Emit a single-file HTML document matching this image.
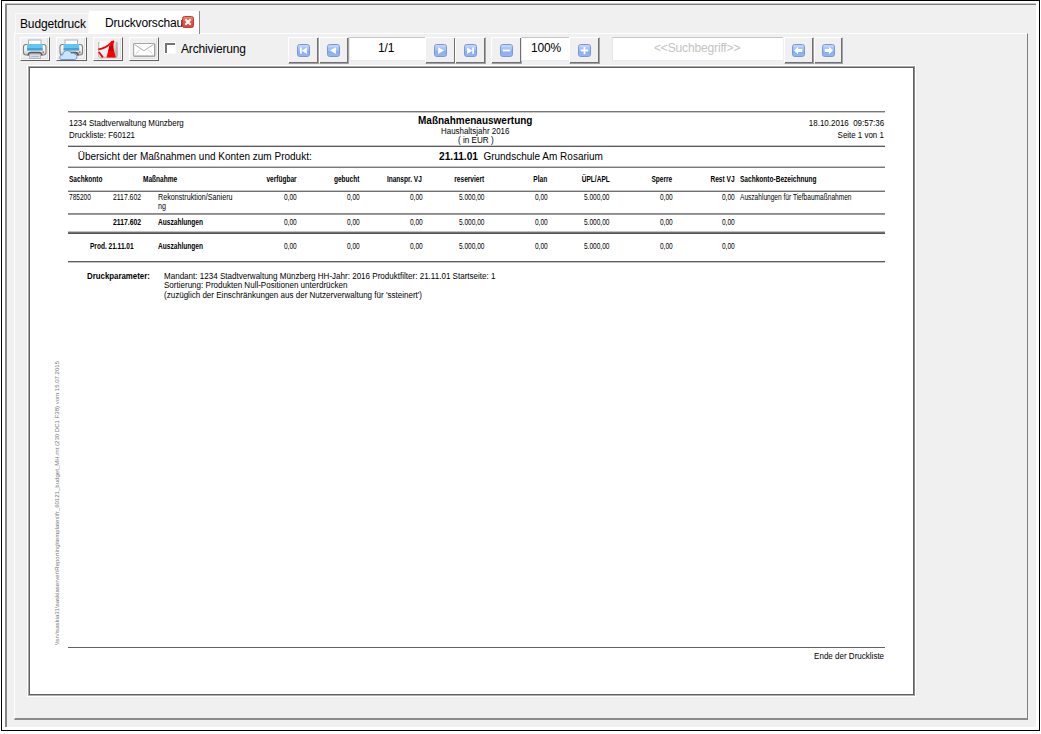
<!DOCTYPE html>
<html><head><meta charset="utf-8">
<style>
html,body{margin:0;padding:0;background:#fff;width:1041px;height:734px;overflow:hidden;position:relative;font-family:"Liberation Sans",sans-serif;}
div,span,svg{position:absolute;box-sizing:border-box;}
.t{white-space:nowrap;line-height:1;}
.win{left:1px;top:0;width:1039px;height:731px;border:1px solid #000;background:#fff;}
.p2{left:5px;top:4px;width:1031px;height:723px;background:#f0f0f0;border-left:2px solid #868686;border-top:1px solid #7e7e7e;}
.tabpanel{left:14px;top:33px;width:1014px;height:687px;border-left:1px solid #fff;border-top:1px solid #fff;border-right:1px solid #808080;border-bottom:2px solid #8a8a8a;}
.tab1{left:15px;top:13px;width:74px;height:20px;background:#f0f0f0;border:1px solid #f9f9f9;border-bottom:none;}
.tab2{left:89px;top:11px;width:111px;height:23px;background:#fff;border-right:1px solid #8a8a8a;}
.ui{font-size:12px;color:#000;letter-spacing:-0.15px;}
.btn{top:37px;height:24px;border-top:1px solid #fff;border-left:1px solid #fff;border-right:1px solid #606060;border-bottom:1px solid #606060;background:#f0f0f0;box-shadow:inset -1px -1px 0 #fafafa, inset -2px -2px 0 #e0e0e0;}
.nbtn{top:37px;height:27px;border-top:1px solid #fff;border-left:1px solid #fff;border-right:1px solid #a4a4a4;border-bottom:1px solid #9aa0a4;background:#f0f0f0;box-shadow:inset -1px -1px 0 #707070;}
.fld{background:#fff;border-top:1px solid #c6c6c6;border-left:1px solid #e6e6e6;border-bottom:1px solid #e8ecf2;}
</style></head><body>
<div class="win"></div>
<div style="left:5px;top:3px;width:1031px;height:1px;background:#c8c8c8;"></div>
<div class="p2"></div>
<div class="tabpanel"></div>
<div class="tab1"></div>
<div class="tab2"></div>
<span class="t ui" style="left:20px;top:18px;">Budgetdruck</span>
<span class="t ui" style="left:105px;top:17px;">Druckvorschau</span>
<!-- close icon -->
<svg style="left:182px;top:16px" width="12" height="12" viewBox="0 0 12 12">
<defs><linearGradient id="cg" x1="0" y1="0" x2="0" y2="1"><stop offset="0" stop-color="#f08a5a"/><stop offset="0.5" stop-color="#e4504a"/><stop offset="1" stop-color="#d8403e"/></linearGradient></defs>
<rect x="0.5" y="0.5" width="11" height="11" rx="2" fill="url(#cg)" stroke="#c83a3a" stroke-width="1"/>
<path d="M3.3 3.3L8.7 8.7M8.7 3.3L3.3 8.7" stroke="#fff" stroke-width="2"/>
</svg>

<!-- toolbar buttons -->
<div class="btn" style="left:20px;width:30px;"></div>
<div class="btn" style="left:56px;width:31px;"></div>
<div class="btn" style="left:93px;width:30px;"></div>
<div class="btn" style="left:129px;width:30px;"></div>

<!-- checkbox -->
<div style="left:164px;top:42px;width:12px;height:12px;border:1px solid #f9f9f9;"></div><div style="left:165px;top:43px;width:10px;height:10px;border-top:2px solid #747474;border-left:2px solid #747474;background:#fff;"></div>
<span class="t ui" style="left:181px;top:43px;">Archivierung</span>

<!-- nav -->
<div class="nbtn" style="left:288px;width:31px;"></div>
<div class="nbtn" style="left:319px;width:30px;"></div>
<div class="fld" style="left:349px;top:37px;width:76px;height:24px;"></div>
<span class="t ui" style="left:378px;top:42px;">1/1</span>
<div class="nbtn" style="left:425px;width:31px;"></div>
<div class="nbtn" style="left:455px;width:31px;"></div>
<div class="nbtn" style="left:491px;width:31px;"></div>
<div class="fld" style="left:521px;top:37px;width:48px;height:24px;"></div>
<span class="t ui" style="left:531px;top:42px;">100%</span>
<div class="nbtn" style="left:569px;width:31px;"></div>
<div class="fld" style="left:612px;top:37px;width:171px;height:24px;"></div>
<span class="t ui" style="left:654px;top:42px;color:#c3c3c3;">&lt;&lt;Suchbegriff&gt;&gt;</span>
<div class="nbtn" style="left:784px;width:30px;"></div>
<div class="nbtn" style="left:814px;width:29px;"></div>

<!--ICONS-->
<svg style="left:20px;top:36px" width="32" height="26" viewBox="0 0 32 26">
<rect x="8.5" y="4" width="12.5" height="5" fill="#fff" stroke="#b0b0b0" stroke-width="1"/>
<defs><linearGradient id="prg" x1="0" y1="0" x2="0" y2="1"><stop offset="0" stop-color="#fdfdfd"/><stop offset="0.6" stop-color="#ececec"/><stop offset="1" stop-color="#c4c4c4"/></linearGradient></defs><rect x="3.5" y="8.5" width="22.5" height="10.5" rx="2.5" fill="url(#prg)" stroke="#808080" stroke-width="1.1"/>
<rect x="7" y="8" width="15.7" height="4.2" fill="#62c6f4"/>
<rect x="7" y="12" width="15.7" height="2.6" fill="#45a3d6"/>
<path d="M8.3 19.5 Q8.3 16.6 11 16.6 H19 Q21.7 16.6 21.7 19.5" fill="none" stroke="#5a5a5a" stroke-width="1.6"/>
<rect x="9.5" y="18" width="11" height="4.6" fill="#d8dce4" stroke="#a8acb4" stroke-width="0.8"/><rect x="11" y="20" width="8" height="1" fill="#b4b8c0"/>
<circle cx="23.2" cy="16.2" r="0.9" fill="#e25a4a"/>
</svg>
<svg style="left:55px;top:36px" width="32" height="26" viewBox="0 0 32 26">
<rect x="10" y="4" width="12.5" height="5" fill="#fff" stroke="#b0b0b0" stroke-width="1"/>
<rect x="5" y="8.5" width="22.5" height="10.5" rx="2.5" fill="url(#prg)" stroke="#808080" stroke-width="1.1"/>
<rect x="8.5" y="8" width="15.7" height="4.2" fill="#62c6f4"/>
<rect x="8.5" y="12" width="15.7" height="2.6" fill="#45a3d6"/>
<path d="M9.8 19.5 Q9.8 16.6 12.5 16.6 H20.5 Q23.2 16.6 23.2 19.5" fill="none" stroke="#5a5a5a" stroke-width="1.6"/>
<circle cx="24.7" cy="16.2" r="0.9" fill="#e25a4a"/>
<path d="M6 23.5 Q4.5 23.5 4.8 21 Q5.2 18.6 7.6 18.8 Q8.2 14.6 12 14.4 Q15.4 14.4 16.4 17.4 Q18.4 16.4 19.8 18 Q22.2 18.4 22 21 Q21.8 23.5 19.5 23.5 Z" fill="#c8e5fa" stroke="#6f8fcc" stroke-width="0.9"/>
</svg>
<svg style="left:93px;top:36px" width="30" height="26" viewBox="0 0 30 26">
<defs><linearGradient id="pg" x1="0" y1="0" x2="1" y2="0.6"><stop offset="0" stop-color="#e4e8ec"/><stop offset="0.15" stop-color="#ffffff"/><stop offset="0.6" stop-color="#eef0f2"/><stop offset="1" stop-color="#b4b4b4"/></linearGradient></defs>
<rect x="5.2" y="5" width="19.4" height="16.8" rx="2" fill="url(#pg)"/><rect x="5.3" y="6" width="0.9" height="15" fill="#a8acb0"/><rect x="23.2" y="6" width="1.3" height="15" fill="#b0b0b0"/><rect x="6" y="20.8" width="18" height="1" fill="#b8b8b8"/>
<path d="M5.3 13.4 Q12.5 12.4 17.6 7.4 Q19.5 5.5 21 5.2" fill="none" stroke="#ff0000" stroke-width="1.9"/>
<path d="M18.2 5 L21.4 5.1 Q20.2 8.5 20.2 11.5 L22.8 21.4 L13.6 21.4 L16.8 8.2 Z" fill="#ff0000"/>
<path d="M16.4 10 L20.2 9.6 L20.6 15 L15.4 15 Z" fill="#cc0000"/>
<path d="M5.8 16 L9.9 21.3" fill="none" stroke="#ff0000" stroke-width="1.9"/>
</svg>
<svg style="left:129px;top:36px" width="30" height="26" viewBox="0 0 30 26">
<rect x="4.6" y="7.5" width="21" height="12.6" rx="0.8" fill="#fff" stroke="#a6a6a6" stroke-width="1.1"/>
<path d="M4.8 20.3 H25.8 V8" fill="none" stroke="#9a9a9a" stroke-width="0.8"/>
<path d="M5.6 8.6 L14.9 14.7 L24.4 8.6" fill="none" stroke="#a4a4a4" stroke-width="0.9"/>
<path d="M6.4 18.4 L11 13.6 M19 13.6 L23.8 18.4" fill="none" stroke="#b8bcc8" stroke-width="0.7"/>
</svg>
<svg width="0" height="0" style="left:0;top:0"><defs><linearGradient id="ng" x1="0" y1="0" x2="0" y2="1"><stop offset="0" stop-color="#bcd4fa"/><stop offset="0.5" stop-color="#9ebdf4"/><stop offset="0.55" stop-color="#8aaef0"/><stop offset="1" stop-color="#94b6f2"/></linearGradient></defs></svg>
<svg style="left:297px;top:44px" width="13" height="13" viewBox="0 0 13 13">
<rect x="0.5" y="0.5" width="12" height="12" rx="2.2" fill="url(#ng)" stroke="#7b98d6" stroke-width="1"/>
<rect x="1.5" y="1.5" width="10" height="1" fill="#c8dcfc" opacity="0.8"/>
<path d="M3 3.6h1.7v6.2H3z M4.6 6.7 L9.9 3.4 V10 Z" fill="#fff"/>
</svg>
<svg style="left:327px;top:44px" width="13" height="13" viewBox="0 0 13 13">
<rect x="0.5" y="0.5" width="12" height="12" rx="2.2" fill="url(#ng)" stroke="#7b98d6" stroke-width="1"/>
<rect x="1.5" y="1.5" width="10" height="1" fill="#c8dcfc" opacity="0.8"/>
<path d="M3 6.5 L8.9 3.3 V9.9 Z" fill="#fff"/>
</svg>
<svg style="left:434px;top:44px" width="13" height="13" viewBox="0 0 13 13">
<rect x="0.5" y="0.5" width="12" height="12" rx="2.2" fill="url(#ng)" stroke="#7b98d6" stroke-width="1"/>
<rect x="1.5" y="1.5" width="10" height="1" fill="#c8dcfc" opacity="0.8"/>
<path d="M10 6.5 L4.1 3.3 V9.9 Z" fill="#fff"/>
</svg>
<svg style="left:464px;top:44px" width="13" height="13" viewBox="0 0 13 13">
<rect x="0.5" y="0.5" width="12" height="12" rx="2.2" fill="url(#ng)" stroke="#7b98d6" stroke-width="1"/>
<rect x="1.5" y="1.5" width="10" height="1" fill="#c8dcfc" opacity="0.8"/>
<path d="M8.3 3.6h1.7v6.2H8.3z M8.4 6.7 L3.1 3.4 V10 Z" fill="#fff"/>
</svg>
<svg style="left:500px;top:44px" width="13" height="13" viewBox="0 0 13 13">
<rect x="0.5" y="0.5" width="12" height="12" rx="2.2" fill="url(#ng)" stroke="#7b98d6" stroke-width="1"/>
<rect x="1.5" y="1.5" width="10" height="1" fill="#c8dcfc" opacity="0.8"/>
<rect x="2.8" y="5.6" width="7.4" height="1.8" fill="#fff"/>
</svg>
<svg style="left:578px;top:44px" width="13" height="13" viewBox="0 0 13 13">
<rect x="0.5" y="0.5" width="12" height="12" rx="2.2" fill="url(#ng)" stroke="#7b98d6" stroke-width="1"/>
<rect x="1.5" y="1.5" width="10" height="1" fill="#c8dcfc" opacity="0.8"/>
<rect x="2.8" y="5.6" width="7.4" height="1.8" fill="#fff"/><rect x="5.6" y="2.8" width="1.8" height="7.4" fill="#fff"/>
</svg>
<svg style="left:792px;top:44px" width="13" height="13" viewBox="0 0 13 13">
<rect x="0.5" y="0.5" width="12" height="12" rx="2.2" fill="url(#ng)" stroke="#7b98d6" stroke-width="1"/>
<rect x="1.5" y="1.5" width="10" height="1" fill="#c8dcfc" opacity="0.8"/>
<path d="M2 6.5 L6 2.8 V5 H10.3 V8 H6 V10.2 Z" fill="#fff"/>
</svg>
<svg style="left:822px;top:44px" width="13" height="13" viewBox="0 0 13 13">
<rect x="0.5" y="0.5" width="12" height="12" rx="2.2" fill="url(#ng)" stroke="#7b98d6" stroke-width="1"/>
<rect x="1.5" y="1.5" width="10" height="1" fill="#c8dcfc" opacity="0.8"/>
<path d="M11 6.5 L7 2.8 V5 H2.7 V8 H7 V10.2 Z" fill="#fff"/>
</svg>
<!--/ICONS-->
<!-- page -->
<div style="left:27px;top:65px;width:889px;height:632px;background:#fff;"></div>
<div style="left:28px;top:66px;width:887px;height:630px;border-left:1px solid #a8a8a8;border-top:1px solid #a8a8a8;border-right:1px solid #8a8a8a;border-bottom:1px solid #b0b0b0;"></div>
<div style="left:29px;top:67px;width:885px;height:628px;border:1px solid #606060;background:#fff;"></div>
<!--PAGE-->
<div style="left:68px;top:111px;width:817px;height:1px;background:#777;"></div>
<div style="left:68px;top:112px;width:817px;height:1px;background:#c8c8c8;"></div>
<div style="left:68px;top:145px;width:817px;height:1px;background:#c8c8c8;"></div>
<div style="left:68px;top:146px;width:817px;height:1px;background:#5a5a5a;"></div>
<div style="left:68px;top:166px;width:817px;height:1px;background:#c4c4c4;"></div>
<div style="left:68px;top:167px;width:817px;height:1px;background:#7a7a7a;"></div>
<div style="left:68px;top:190px;width:817px;height:1px;background:#c4c4c4;"></div>
<div style="left:68px;top:191px;width:817px;height:1px;background:#727272;"></div>
<div style="left:68px;top:213px;width:817px;height:1px;background:#8a8a8a;"></div>
<div style="left:68px;top:214px;width:817px;height:1px;background:#9c9c9c;"></div>
<div style="left:68px;top:231px;width:817px;height:1px;background:#c4c4c4;"></div>
<div style="left:68px;top:232px;width:817px;height:1px;background:#727272;"></div>
<div style="left:68px;top:233px;width:817px;height:1px;background:#555;"></div>
<div style="left:68px;top:261px;width:817px;height:1px;background:#5c5c5c;"></div>
<div style="left:68px;top:262px;width:817px;height:1px;background:#c4c4c4;"></div>
<div style="left:68px;top:647px;width:817px;height:1px;background:#626262;"></div>
<span class="t" style="left:69px;top:119px;font-size:8.4px;transform:scaleX(0.9520);transform-origin:0 0;">1234 Stadtverwaltung Münzberg</span>
<span class="t" style="left:69px;top:131px;font-size:8.4px;transform:scaleX(0.9452);transform-origin:0 0;">Druckliste: F60121</span>
<span class="t" style="left:418px;top:116px;font-size:10px;font-weight:bold;">Maßnahmenauswertung</span>
<span class="t" style="left:441px;top:127px;font-size:8.4px;transform:scaleX(0.9477);transform-origin:0 0;">Haushaltsjahr 2016</span>
<span class="t" style="left:457.6px;top:136px;font-size:8.4px;transform:scaleX(0.9710);transform-origin:0 0;">( in EUR )</span>
<span class="t" style="right:157.00px;top:119px;font-size:8.4px;transform:scaleX(0.9511);transform-origin:100% 0;">18.10.2016  09:57:36</span>
<span class="t" style="right:157.20px;top:131px;font-size:8.4px;transform:scaleX(0.9470);transform-origin:100% 0;">Seite 1 von 1</span>
<span class="t" style="left:77.7px;top:152px;font-size:10px;">Übersicht der Maßnahmen und Konten zum Produkt:</span>
<span class="t" style="left:439px;top:152px;font-size:10px;font-weight:bold;transform:scaleX(1.0163);transform-origin:0 0;">21.11.01</span>
<span class="t" style="left:483.4px;top:152px;font-size:10px;">Grundschule Am Rosarium</span>
<span class="t" style="left:68.8px;top:175px;font-size:8.6px;font-weight:bold;transform:scaleX(0.7628);transform-origin:0 0;">Sachkonto</span>
<span class="t" style="left:143px;top:175px;font-size:8.6px;font-weight:bold;transform:scaleX(0.7628);transform-origin:0 0;">Maßnahme</span>
<span class="t" style="right:744.70px;top:175px;font-size:8.6px;font-weight:bold;transform:scaleX(0.7628);transform-origin:100% 0;">verfügbar</span>
<span class="t" style="right:681.70px;top:175px;font-size:8.6px;font-weight:bold;transform:scaleX(0.7628);transform-origin:100% 0;">gebucht</span>
<span class="t" style="right:618.70px;top:175px;font-size:8.6px;font-weight:bold;transform:scaleX(0.7628);transform-origin:100% 0;">Inanspr. VJ</span>
<span class="t" style="right:556.50px;top:175px;font-size:8.6px;font-weight:bold;transform:scaleX(0.7628);transform-origin:100% 0;">reserviert</span>
<span class="t" style="right:493.70px;top:175px;font-size:8.6px;font-weight:bold;transform:scaleX(0.7628);transform-origin:100% 0;">Plan</span>
<span class="t" style="right:431.30px;top:175px;font-size:8.6px;font-weight:bold;transform:scaleX(0.7628);transform-origin:100% 0;">ÜPL/APL</span>
<span class="t" style="right:368.50px;top:175px;font-size:8.6px;font-weight:bold;transform:scaleX(0.7628);transform-origin:100% 0;">Sperre</span>
<span class="t" style="right:306.50px;top:175px;font-size:8.6px;font-weight:bold;transform:scaleX(0.7628);transform-origin:100% 0;">Rest VJ</span>
<span class="t" style="left:739.5px;top:175px;font-size:8.6px;font-weight:bold;transform:scaleX(0.7628);transform-origin:0 0;">Sachkonto-Bezeichnung</span>
<span class="t" style="left:69px;top:193px;font-size:8.6px;transform:scaleX(0.7628);transform-origin:0 0;">785200</span>
<span class="t" style="left:113px;top:193px;font-size:8.6px;transform:scaleX(0.7950);transform-origin:0 0;">2117.602</span>
<span class="t" style="left:157.5px;top:193px;font-size:8.6px;transform:scaleX(0.8340);transform-origin:0 0;">Rekonstruktion/Sanieru</span>
<span class="t" style="left:157.5px;top:202px;font-size:8.6px;transform:scaleX(0.8330);transform-origin:0 0;">ng</span>
<span class="t" style="right:744.70px;top:193px;font-size:8.6px;transform:scaleX(0.7628);transform-origin:100% 0;">0,00</span>
<span class="t" style="right:681.70px;top:193px;font-size:8.6px;transform:scaleX(0.7628);transform-origin:100% 0;">0,00</span>
<span class="t" style="right:618.70px;top:193px;font-size:8.6px;transform:scaleX(0.7628);transform-origin:100% 0;">0,00</span>
<span class="t" style="right:556.50px;top:193px;font-size:8.6px;transform:scaleX(0.7628);transform-origin:100% 0;">5.000,00</span>
<span class="t" style="right:493.70px;top:193px;font-size:8.6px;transform:scaleX(0.7628);transform-origin:100% 0;">0,00</span>
<span class="t" style="right:431.30px;top:193px;font-size:8.6px;transform:scaleX(0.7628);transform-origin:100% 0;">5.000,00</span>
<span class="t" style="right:368.50px;top:193px;font-size:8.6px;transform:scaleX(0.7628);transform-origin:100% 0;">0,00</span>
<span class="t" style="right:306.50px;top:193px;font-size:8.6px;transform:scaleX(0.7628);transform-origin:100% 0;">0,00</span>
<span class="t" style="left:739.5px;top:193px;font-size:8.6px;transform:scaleX(0.7652);transform-origin:0 0;">Auszahlungen für Tiefbaumaßnahmen</span>
<span class="t" style="left:113px;top:218px;font-size:8.6px;font-weight:bold;transform:scaleX(0.7915);transform-origin:0 0;">2117.602</span>
<span class="t" style="left:158px;top:218px;font-size:8.6px;font-weight:bold;transform:scaleX(0.7662);transform-origin:0 0;">Auszahlungen</span>
<span class="t" style="right:744.70px;top:218px;font-size:8.6px;transform:scaleX(0.7628);transform-origin:100% 0;">0,00</span>
<span class="t" style="right:681.70px;top:218px;font-size:8.6px;transform:scaleX(0.7628);transform-origin:100% 0;">0,00</span>
<span class="t" style="right:618.70px;top:218px;font-size:8.6px;transform:scaleX(0.7628);transform-origin:100% 0;">0,00</span>
<span class="t" style="right:556.50px;top:218px;font-size:8.6px;transform:scaleX(0.7628);transform-origin:100% 0;">5.000,00</span>
<span class="t" style="right:493.70px;top:218px;font-size:8.6px;transform:scaleX(0.7628);transform-origin:100% 0;">0,00</span>
<span class="t" style="right:431.30px;top:218px;font-size:8.6px;transform:scaleX(0.7628);transform-origin:100% 0;">5.000,00</span>
<span class="t" style="right:368.50px;top:218px;font-size:8.6px;transform:scaleX(0.7628);transform-origin:100% 0;">0,00</span>
<span class="t" style="right:306.50px;top:218px;font-size:8.6px;transform:scaleX(0.7628);transform-origin:100% 0;">0,00</span>
<span class="t" style="left:89.6px;top:242px;font-size:8.6px;font-weight:bold;transform:scaleX(0.7605);transform-origin:0 0;">Prod. 21.11.01</span>
<span class="t" style="left:158px;top:242px;font-size:8.6px;font-weight:bold;transform:scaleX(0.7662);transform-origin:0 0;">Auszahlungen</span>
<span class="t" style="right:744.70px;top:242px;font-size:8.6px;transform:scaleX(0.7628);transform-origin:100% 0;">0,00</span>
<span class="t" style="right:681.70px;top:242px;font-size:8.6px;transform:scaleX(0.7628);transform-origin:100% 0;">0,00</span>
<span class="t" style="right:618.70px;top:242px;font-size:8.6px;transform:scaleX(0.7628);transform-origin:100% 0;">0,00</span>
<span class="t" style="right:556.50px;top:242px;font-size:8.6px;transform:scaleX(0.7628);transform-origin:100% 0;">5.000,00</span>
<span class="t" style="right:493.70px;top:242px;font-size:8.6px;transform:scaleX(0.7628);transform-origin:100% 0;">0,00</span>
<span class="t" style="right:431.30px;top:242px;font-size:8.6px;transform:scaleX(0.7628);transform-origin:100% 0;">5.000,00</span>
<span class="t" style="right:368.50px;top:242px;font-size:8.6px;transform:scaleX(0.7628);transform-origin:100% 0;">0,00</span>
<span class="t" style="right:306.50px;top:242px;font-size:8.6px;transform:scaleX(0.7628);transform-origin:100% 0;">0,00</span>
<span class="t" style="left:87px;top:272px;font-size:8.4px;font-weight:bold;transform:scaleX(0.9369);transform-origin:0 0;">Druckparameter:</span>
<span class="t" style="left:164.2px;top:272px;font-size:8.4px;transform:scaleX(0.9601);transform-origin:0 0;">Mandant: 1234 Stadtverwaltung Münzberg HH-Jahr: 2016 Produktfilter: 21.11.01 Startseite: 1</span>
<span class="t" style="left:164.2px;top:281px;font-size:8.4px;transform:scaleX(0.9590);transform-origin:0 0;">Sortierung: Produkten Null-Positionen unterdrücken</span>
<span class="t" style="left:164.2px;top:291px;font-size:8.4px;transform:scaleX(0.9591);transform-origin:0 0;">(zuzüglich der Einschränkungen aus der Nutzerverwaltung für 'ssteinert')</span>
<span class="t" style="right:157.00px;top:652px;font-size:8.4px;transform:scaleX(0.9577);transform-origin:100% 0;">Ende der Druckliste</span>
<span class="t" style="left:54px;top:645px;font-size:6px;color:#7a7a7a;transform:rotate(-90deg) scaleX(1.008);transform-origin:0 0;">\\srv\saskia31\saskiaserver\Reporting\templates\fr_60121_budget_MH.rnt (230 DC1 F38) vom 15.07.2015</span>
<!--/PAGE-->
</body></html>
